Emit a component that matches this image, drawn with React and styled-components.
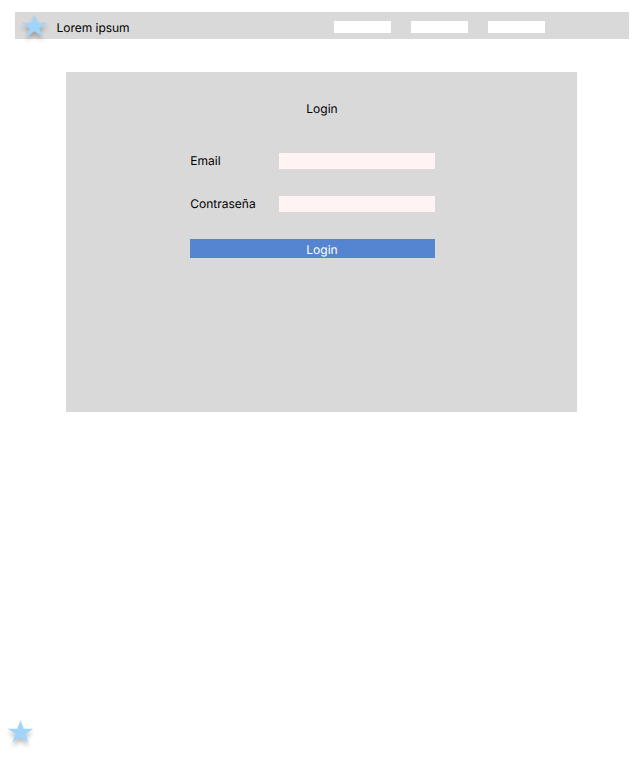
import React from "react";
import styled, { createGlobalStyle } from "styled-components";

const GlobalStyle = createGlobalStyle`
  body { margin: 0; background: #fff; }
  * { box-sizing: border-box; }
`;

const Page = styled.div`
  display: flex;
  flex-direction: column;
  height: 766px;
  padding-top: 12px;
  font: 12px/15px Inter, sans-serif;
  text-rendering: geometricPrecision;
  color: #000;
`;

const Header = styled.header`
  display: flex;
  flex: none;
  height: 27px;
  margin: 0 15px;
  background: #d9d9d9;
`;

const Brand = styled.span`
  width: 277.5px;
  padding-top: 8px;
  letter-spacing: -0.03px;
`;

const Nav = styled.nav`
  display: flex;
  gap: 20px;
  padding-top: 9px;
`;

const NavItem = styled.span`
  width: 57px;
  height: 12px;
  background: #fff;
`;

const StarIcon = styled.svg`
  display: block;
  width: 34px;
  height: 34px;
  overflow: visible;
  filter: drop-shadow(0 4px 2px rgba(0, 0, 0, 0.25));
`;

const HeaderStar = styled.div`
  width: 34px;
  height: 27px;
  margin: 0 4.5px 0 3px;
`;

const Panel = styled.main`
  display: flex;
  flex: none;
  flex-direction: column;
  width: 511px;
  height: 340px;
  margin: 33px 0 0 66px;
  padding: 29px 142px 0 124px;
  background: #d9d9d9;
`;

const Title = styled.h1`
  margin: 0 0 37px 116.3px;
  font: inherit;
`;

const Field = styled.label`
  display: flex;
  height: 16px;
  margin-bottom: 27px;
`;

const Label = styled.span`
  width: 89px;
  padding-left: 0.3px;
`;

const Input = styled.input`
  width: 156px;
  height: 16px;
  padding: 0 4px;
  border: 0;
  border-radius: 0;
  background: #fff3f3;
  font: inherit;
`;

const Submit = styled.button`
  height: 19px;
  padding: 3px 0 1px 116.3px;
  border: 0;
  background: #5585d0;
  color: #fff;
  font: inherit;
  line-height: 15px;
  text-align: left;
  text-rendering: inherit;
`;

const Footer = styled.footer`
  margin: auto 0 14px 4px;
  height: 34px;
`;

function Star() {
  return (
    <StarIcon viewBox="0 0 34 34" aria-hidden="true">
      <path
        d="M16.5 2L19.53 10.64H29.34L21.4 15.98L24.44 24.61L16.5 19.28L8.56 24.61L11.6 15.98L3.66 10.64H13.47Z"
        fill="#a0d4fb"
      />
    </StarIcon>
  );
}

export default function App() {
  return (
    <>
      <GlobalStyle />
      <Page>
        <Header>
          <HeaderStar><Star /></HeaderStar>
          <Brand>Lorem ipsum</Brand>
          <Nav>
            <NavItem />
            <NavItem />
            <NavItem />
          </Nav>
        </Header>
        <Panel>
          <Title>Login</Title>
          <Field>
            <Label>Email</Label>
            <Input type="email" />
          </Field>
          <Field>
            <Label>Contraseña</Label>
            <Input type="password" />
          </Field>
          <Submit type="button">Login</Submit>
        </Panel>
        <Footer><Star /></Footer>
      </Page>
    </>
  );
}
